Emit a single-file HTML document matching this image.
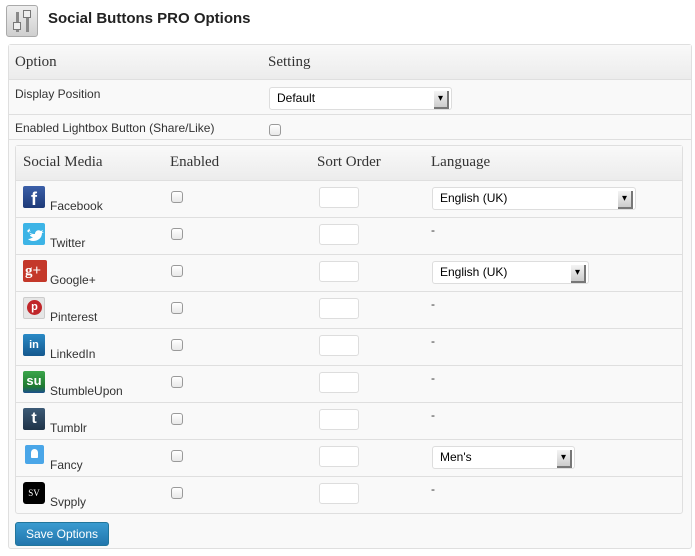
<!DOCTYPE html>
<html><head><style>
*{box-sizing:border-box;margin:0;padding:0}
body{width:695px;height:556px;background:#fff;font-family:"Liberation Sans",sans-serif;color:#333;position:relative;overflow:hidden}
.a{position:absolute}
.serif{font-family:"Liberation Serif",serif;font-size:15px;color:#333}
.t{font-size:12px;color:#333}
.cb{position:absolute;width:12px;height:12px;border:1px solid #9a9a9a;border-radius:3px;background:linear-gradient(#fff,#e8e8e8)}
.in{position:absolute;width:40px;height:21px;border:1px solid #ddd;border-radius:3px;background:#fff}
.sel{position:absolute;height:23px;border:1px solid #ddd;border-radius:3px;background:#fff;font-size:12px;color:#000;padding:3px 0 0 7px}
.sel:after{content:"▾";position:absolute;right:2px;top:3px;width:13px;height:16px;background:linear-gradient(#f4f4f4,#ccc);border-right:2px solid #777;border-bottom:2px solid #777;font-size:10px;text-align:center;line-height:15px;color:#000}
.row{position:absolute;left:16px;width:666px;height:37px;border-top:1px solid #dfdfdf}
.ic{position:absolute;left:7px;top:5px;width:22px;height:22px;border-radius:2px}
.nm{position:absolute;left:34px;top:18px;font-size:12px;color:#333}
.dash{position:absolute;left:415px;top:5px;font-size:12px}
</style></head><body>
<div class="a" style="left:6px;top:5px;width:32px;height:32px;border:1px solid #aaa;border-radius:3px;background:linear-gradient(#eee,#cfcfcf)">
<div class="a" style="left:9px;top:6px;width:3px;height:20px;background:#888"></div>
<div class="a" style="left:6px;top:16px;width:8px;height:8px;border:1px solid #777;background:#eee"></div>
<div class="a" style="left:19px;top:6px;width:3px;height:20px;background:#888"></div>
<div class="a" style="left:16px;top:4px;width:8px;height:8px;border:1px solid #777;background:#eee"></div>
</div>
<div class="a" style="left:48px;top:10px;font-size:15px;font-weight:bold;color:#222">Social Buttons PRO Options</div>

<div class="a" style="left:8px;top:44px;width:684px;height:505px;border:1px solid #dfdfdf;border-radius:3px;background:#f9f9f9"></div>
<div class="a" style="left:9px;top:45px;width:682px;height:35px;background:linear-gradient(#f9f9f9,#ececec);border-bottom:1px solid #dfdfdf"></div>
<div class="a serif" style="left:15px;top:54px">Option</div>
<div class="a serif" style="left:268px;top:54px">Setting</div>
<div class="a t" style="left:15px;top:87px">Display Position</div>
<div class="sel" style="left:269px;top:87px;width:183px">Default</div>
<div class="a" style="left:9px;top:114px;width:682px;border-top:1px solid #dfdfdf"></div>
<div class="a t" style="left:15px;top:121px">Enabled Lightbox Button (Share/Like)</div>
<div class="cb" style="left:269px;top:124px"></div>
<div class="a" style="left:9px;top:139px;width:682px;border-top:1px solid #dfdfdf"></div>

<div class="a" style="left:15px;top:145px;width:668px;height:369px;border:1px solid #dfdfdf;border-radius:3px;background:#f9f9f9"></div>
<div class="a" style="left:16px;top:146px;width:666px;height:34px;background:linear-gradient(#f9f9f9,#ececec)"></div>
<div class="a serif" style="left:23px;top:154px">Social Media</div>
<div class="a serif" style="left:170px;top:154px">Enabled</div>
<div class="a serif" style="left:317px;top:154px">Sort Order</div>
<div class="a serif" style="left:431px;top:154px">Language</div>

<div class="row" style="top:180px"><div class="ic" style="background:linear-gradient(#3b5fa8,#1e3a78);color:#fff;font:bold 18px 'Liberation Sans';text-align:center;line-height:26px">f</div><div class="nm">Facebook</div><div class="cb" style="left:155px;top:10px"></div><div class="in" style="left:303px;top:6px"></div><div class="sel" style="left:416px;top:6px;width:204px">English (UK)</div></div>
<div class="row" style="top:217px"><div class="ic" style="background:#3db4e6"><svg width="22" height="22" viewBox="0 0 22 22"><path d="M4 8c2 2 5 3 8 3 0-3 3-5 6-3l2-1-1 2 2 0-2 1c0 5-4 8-9 8-2 0-4-1-5-2 2 0 4-1 5-2-2 0-3-1-3-2h2c-2-1-3-2-3-4l2 1c-1-1-2-3-1-4z" fill="#fff"/></svg></div><div class="nm">Twitter</div><div class="cb" style="left:155px;top:10px"></div><div class="in" style="left:303px;top:6px"></div><div class="dash">-</div></div>
<div class="row" style="top:254px"><div class="ic" style="background:#c4382a;color:#fff;font:bold 15px 'Liberation Serif';line-height:22px;width:24px;padding-left:2px">g+</div><div class="nm">Google+</div><div class="cb" style="left:155px;top:10px"></div><div class="in" style="left:303px;top:6px"></div><div class="sel" style="left:416px;top:6px;width:157px">English (UK)</div></div>
<div class="row" style="top:291px"><div class="ic" style="background:#e6e6e6;border:1px solid #ccc"><div class="a" style="left:3px;top:2px;width:15px;height:15px;border-radius:50%;background:#c0262a;color:#fff;font:bold 11px 'Liberation Sans';text-align:center;line-height:15px">p</div></div><div class="nm">Pinterest</div><div class="cb" style="left:155px;top:10px"></div><div class="in" style="left:303px;top:6px"></div><div class="dash">-</div></div>
<div class="row" style="top:328px"><div class="ic" style="background:linear-gradient(#2a8ac6,#15588e);color:#fff;font:bold 11px 'Liberation Sans';text-align:center;line-height:22px">in</div><div class="nm">LinkedIn</div><div class="cb" style="left:155px;top:10px"></div><div class="in" style="left:303px;top:6px"></div><div class="dash">-</div></div>
<div class="row" style="top:365px"><div class="ic" style="background:linear-gradient(#3aa54a,#1f7a30 70%,#1d4f8c);color:#fff;font:bold 13px 'Liberation Sans';text-align:center;line-height:20px">su</div><div class="nm">StumbleUpon</div><div class="cb" style="left:155px;top:10px"></div><div class="in" style="left:303px;top:6px"></div><div class="dash">-</div></div>
<div class="row" style="top:402px"><div class="ic" style="background:linear-gradient(#3c5a76,#1f3348);color:#fff;font:bold 16px 'Liberation Sans';text-align:center;line-height:22px">t</div><div class="nm">Tumblr</div><div class="cb" style="left:155px;top:10px"></div><div class="in" style="left:303px;top:6px"></div><div class="dash">-</div></div>
<div class="row" style="top:439px"><div class="ic" style="left:9px;width:19px;height:19px;background:#4aa6e8"><div class="a" style="left:6px;top:4px;width:7px;height:9px;border-radius:4px 4px 1px 1px;background:#fff"></div></div><div class="nm">Fancy</div><div class="cb" style="left:155px;top:10px"></div><div class="in" style="left:303px;top:6px"></div><div class="sel" style="left:416px;top:6px;width:143px">Men's</div></div>
<div class="row" style="top:476px"><div class="ic" style="background:#000;border-radius:3px;color:#fff;font:9px 'Liberation Serif';text-align:center;line-height:22px">SV</div><div class="nm">Svpply</div><div class="cb" style="left:155px;top:10px"></div><div class="in" style="left:303px;top:6px"></div><div class="dash">-</div></div>

<div class="a" style="left:15px;top:522px;width:94px;height:24px;border:1px solid #21759b;border-radius:3px;background:linear-gradient(#3a9bd0,#2276ad);color:#fff;font-size:12px;text-align:center;line-height:22px">Save Options</div>
</body></html>
